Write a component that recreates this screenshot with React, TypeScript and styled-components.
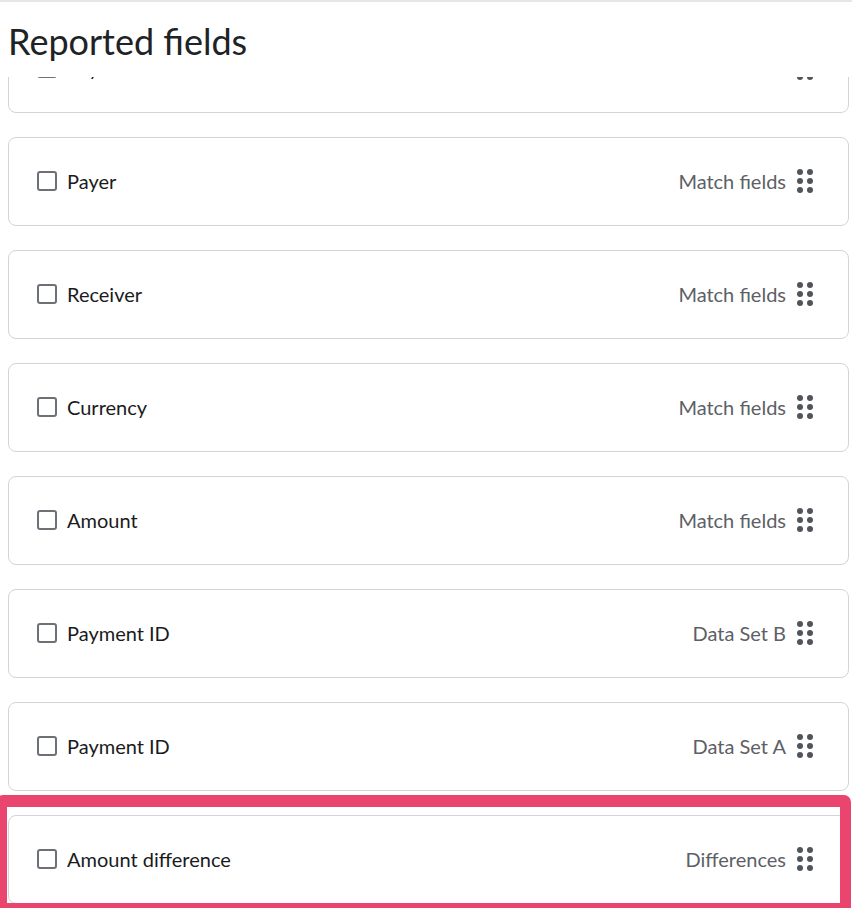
import React, { useLayoutEffect, useRef } from "react";
import styled, { createGlobalStyle } from "styled-components";

const Global = createGlobalStyle`
  html, body { margin: 0; padding: 0; background: #ffffff; overflow: hidden; }
  body { font-family: "Lato", "Liberation Sans", sans-serif; }
  #root { width: 852px; height: 908px; }
`;

const Page = styled.div`
  position: relative;
  width: 852px;
  height: 908px;
  border-top: 2px solid #e6e6ea;
  box-sizing: border-box;
  display: flex;
  flex-direction: column;
  overflow: hidden;
`;

const Title = styled.h1`
  margin: 0;
  padding: 19px 0 0 8px;
  height: 75px;
  flex-shrink: 0;
  box-sizing: border-box;
  font-family: "Lato", "Liberation Sans", sans-serif;
  font-weight: 400;
  font-size: 36px;
  line-height: 40px;
  color: #202326;
`;

const Viewport = styled.div`
  flex: 1;
  overflow: hidden;
`;

const List = styled.div`
  display: flex;
  flex-direction: column;
  gap: 24px;
  padding: 0 3px 40px 8px;
`;

const Card = styled.div`
  height: 89px;
  box-sizing: border-box;
  border: 1.5px solid #d4d4d6;
  border-radius: 8px;
  background: #fff;
  display: flex;
  align-items: center;
  padding: 0 35px 2px 28px;
  flex-shrink: 0;
`;

const Box = styled.span`
  width: 20px;
  height: 20px;
  box-sizing: border-box;
  border: 2px solid #6c7177;
  border-radius: 3px;
  flex-shrink: 0;
`;

const Label = styled.span`
  margin-left: 10px;
  font-size: 20px;
  color: #1a1b1d;
  flex: 1;
`;

const Group = styled.span`
  font-size: 20px;
  color: #5d6065;
  margin-right: 11px;
`;

const Highlight = styled.div`
  position: absolute;
  left: -4px;
  right: 1px;
  top: 793px;
  height: 115px;
  box-sizing: border-box;
  border: 11px solid #e9456f;
  border-top-width: 12px;
  border-bottom-width: 7px;
  border-radius: 7px 7px 0 0;
  pointer-events: none;
`;

const DragHandle = () => (
  <svg width="16" height="24" viewBox="0 0 16 24" aria-hidden>
    {[3, 12, 21].map((cy) =>
      [3, 13].map((cx) => <circle key={`${cx}-${cy}`} cx={cx} cy={cy} r={3} fill="#515459" />)
    )}
  </svg>
);

const rows = [
  { label: "Payer", group: "Data Set A" },
  { label: "Payer", group: "Match fields" },
  { label: "Receiver", group: "Match fields" },
  { label: "Currency", group: "Match fields" },
  { label: "Amount", group: "Match fields" },
  { label: "Payment ID", group: "Data Set B" },
  { label: "Payment ID", group: "Data Set A" },
  { label: "Amount difference", group: "Differences" },
  { label: "Status", group: "Differences" },
];

export default function App() {
  const ref = useRef<HTMLDivElement>(null);
  useLayoutEffect(() => {
    if (ref.current) ref.current.scrollTop = 53;
  }, []);
  return (
    <>
      <Global />
      <Page>
        <Title>Reported fields</Title>
        <Viewport ref={ref}>
          <List>
            {rows.map((r, i) => (
              <Card key={i}>
                <Box />
                <Label>{r.label}</Label>
                <Group>{r.group}</Group>
                <DragHandle />
              </Card>
            ))}
          </List>
        </Viewport>
        <Highlight />
      </Page>
    </>
  );
}
